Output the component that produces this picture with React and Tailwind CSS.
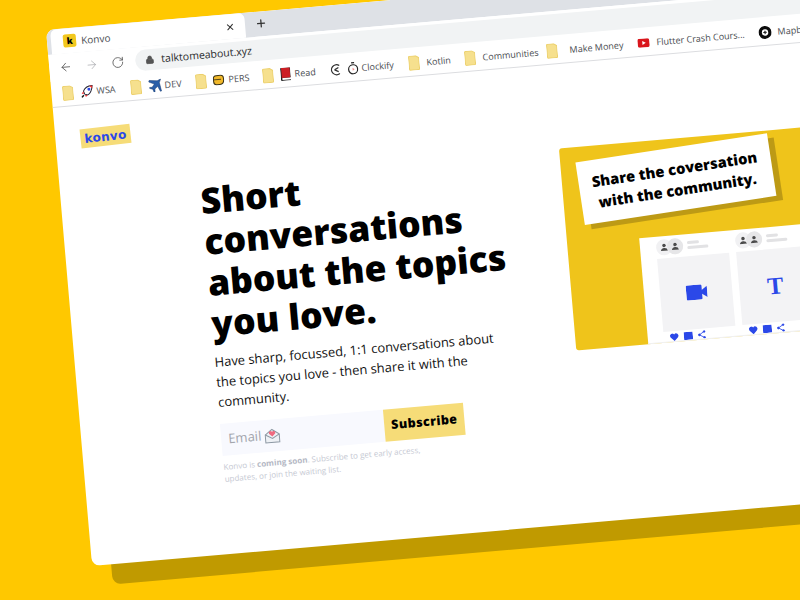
import React from 'react';
import { ArrowLeft, ArrowRight, RotateCw, Lock, X, Plus } from 'lucide-react';

const BLUE = '#2b48e8';

function Folder() {
  return (
    <svg width="11" height="15" viewBox="0 0 11 15" className="shrink-0">
      <path d="M.5 1.500q0-1 1-1h6l3 2v11q0 1-1 1h-8q-1 0-1-1z" fill="#f6e08e" stroke="#ecd06c" />
    </svg>
  );
}

function Rocket() {
  return (
    <svg width="13" height="13" viewBox="0 0 13 13" className="shrink-0">
      <path d="M4 9 3 6q2-5 9-5-1 7-5 9z" fill="#fff" stroke="#223" strokeWidth="1" />
      <circle cx="8.500" cy="4.500" r="1.500" fill="#2b48e8" />
      <path d="M12 1 9 1l3 3z" fill="#e33" />
      <path d="M3 6 1 8l2 1zM7 10l-2 2-1-2z" fill="#e33" />
      <path d="M3 10 1 12" stroke="#111" strokeWidth="1.500" />
    </svg>
  );
}

function Plane() {
  return (
    <svg width="13" height="13" viewBox="0 0 13 13" className="shrink-0">
      <path d="M12.500.5 9 2 1 1 .5 2.500 6 5 3.500 8 1 8l0 1 3 1 1 3 1-.2V10l3-2.500 2.500 5.500 1-.5L11 4z" fill="#2a5ea8" stroke="#173a70" strokeWidth=".5" />
    </svg>
  );
}

function Fist() {
  return (
    <svg width="12" height="11" viewBox="0 0 12 11" className="shrink-0">
      <path d="M1 4q0-3 3-3h4q3 0 3 3v2q0 4-4 4H4q-3 0-3-3z" fill="#f1b82a" stroke="#3a3216" />
      <path d="M1.500 5h7" stroke="#3a3216" strokeWidth=".8" />
    </svg>
  );
}

function Book() {
  return (
    <svg width="10" height="13" viewBox="0 0 10 13" className="shrink-0">
      <path d="M0 1q0-1 1-1h9v10H1.500v2H10v1H1q-1 0-1-1z" fill="#222" />
      <rect x="1" y="0" width="8.500" height="10" fill="#cc1f25" />
    </svg>
  );
}

function Gauge() {
  return (
    <svg width="13" height="13" viewBox="0 0 13 13" fill="none" stroke="#333" strokeWidth="1.300" className="shrink-0">
      <path d="M11 2.500A5 5 0 1 0 11 10.500" />
      <path d="M6 6.500 10 4.500M6 6.500l4 2" />
    </svg>
  );
}

function Stopwatch() {
  return (
    <svg width="11" height="13" viewBox="0 0 11 13" fill="none" stroke="#222" strokeWidth="1.200" className="shrink-0">
      <circle cx="5.500" cy="7.500" r="4.500" />
      <path d="M4 1h3" />
      <path d="M5 6l2 1.500-2 1.500z" fill="#e88" stroke="none" />
    </svg>
  );
}

function Youtube() {
  return (
    <svg width="12" height="9" viewBox="0 0 12 9" className="shrink-0">
      <rect width="12" height="9" rx="2.200" fill="#d9161c" />
      <path d="M4.800 2.500v4l3.400-2z" fill="#fff" />
    </svg>
  );
}

function MapbIcon() {
  return (
    <svg width="13" height="13" viewBox="0 0 13 13" className="shrink-0">
      <circle cx="6.500" cy="6.500" r="6.500" fill="#0b0b0b" />
      <circle cx="6.500" cy="6.500" r="3.200" fill="#fff" />
      <path d="M6.500 4.800v3.400M4.800 6.500h3.400" stroke="#0b0b0b" />
    </svg>
  );
}

function Bookmark({ icon, label, gap, width }) {
  return (
    <div className={`flex items-center shrink-0 ${gap} ${width}`}>
      {icon}
      {label && <span className="text-[9px] leading-none text-[#4a4d52] whitespace-nowrap">{label}</span>}
    </div>
  );
}

function Person() {
  return (
    <svg width="8" height="8" viewBox="0 0 8 8" fill="#4b4b4b">
      <circle cx="4" cy="2.200" r="1.700" />
      <path d="M.5 7.500Q1 4.800 4 4.800T7.500 7.500z" />
    </svg>
  );
}

function MiniCard({ children }) {
  return (
    <div className="flex flex-col w-[72px] shrink-0">
      <div className="flex items-center h-[20px]">
        <div className="w-[16px] h-[16px] rounded-full bg-[#f1f1f3] flex items-center justify-center">
          <Person />
        </div>
        <div className="w-[16px] h-[16px] rounded-full bg-[#e6e6e8] flex items-center justify-center -ml-[5px]">
          <Person />
        </div>
        <div className="ml-[4px] flex flex-col gap-[2px]">
          <div className="w-[12px] h-[3px] rounded-full bg-[#e2e2e4]" />
          <div className="w-[21px] h-[3px] rounded-full bg-[#e2e2e4]" />
        </div>
      </div>
      <div className="h-[73px] bg-[#f3f3f5] flex items-center justify-center mt-[1px]">{children}</div>
      <div className="flex items-center gap-[5px] mt-[2px] pl-[6px]" style={{ color: BLUE }}>
        <svg width="9" height="8" viewBox="0 0 9 8" fill="currentColor">
          <path d="M4.500 8 .7 4.200A2.300 2.300 0 0 1 4.500 1.400 2.300 2.300 0 0 1 8.300 4.200z" />
        </svg>
        <svg width="9" height="8" viewBox="0 0 9 8" fill="currentColor">
          <path d="M0 0h9v8H2L0 8z" />
        </svg>
        <svg width="8" height="8" viewBox="0 0 8 8" fill="none" stroke="currentColor" strokeWidth=".8">
          <path d="M6.500 1 1.500 4l5 3" />
          <circle cx="6.500" cy="1" r=".9" fill="currentColor" />
          <circle cx="1.500" cy="4" r=".9" fill="currentColor" />
          <circle cx="6.500" cy="7" r=".9" fill="currentColor" />
        </svg>
      </div>
    </div>
  );
}

export default function App() {
  return (
    <div className="relative w-[800px] h-[600px] overflow-hidden bg-[#ffc800] font-['Open_Sans',sans-serif]">
      {/* browser window, skewed like the mockup */}
      <div className="absolute left-0 top-0 w-[1000px] h-[536px] origin-top-left [transform:matrix(1,-0.087,0.086,1,46,30)] bg-white rounded-[8px] overflow-hidden shadow-[19px_20px_0_#c09a00] flex flex-col">
        {/* tab strip */}
        <div className="h-[25px] bg-[#dee1e6] flex items-end pl-[4px] shrink-0">
          <div className="w-[194px] h-[25px] bg-white rounded-t-[6px] flex items-center pl-[12px] pr-[10px]">
            <div className="w-[13px] h-[13px] rounded-[2px] bg-[#f2c81e] flex items-center justify-center text-[9px] font-extrabold leading-none text-black">k</div>
            <span className="ml-[5px] text-[10px] leading-none text-[#4a4d52]">Konvo</span>
            <X className="ml-auto w-[10px] h-[10px] text-[#333]" strokeWidth={2.500} />
          </div>
          <Plus className="ml-[10px] mb-[7px] w-[12px] h-[12px] text-[#333]" strokeWidth={2.500} />
        </div>
        {/* toolbar */}
        <div className="h-[27px] flex items-center pl-[10px] shrink-0 bg-white">
          <ArrowLeft className="w-[13px] h-[13px] text-[#555]" strokeWidth={1.500} />
          <ArrowRight className="ml-[13px] w-[13px] h-[13px] text-[#b4b6b9]" strokeWidth={1.500} />
          <RotateCw className="ml-[13px] w-[13px] h-[13px] text-[#555]" strokeWidth={1.500} />
          <div className="ml-[11px] flex-1 h-[21px] rounded-l-full bg-[#f1f3f4] flex items-center pl-[10px]">
            <Lock className="w-[9px] h-[9px] text-[#555]" fill="#555" strokeWidth={2} />
            <span className="ml-[7px] text-[10.500px] leading-none text-[#2a2b2d]">talktomeabout.xyz</span>
          </div>
        </div>
        {/* bookmarks */}
        <div className="h-[26px] flex items-center pl-[11px] border-b border-[#dcdde0] shrink-0">
          <Bookmark icon={<Folder />} width="w-[17.500px]" />
          <Bookmark icon={<Rocket />} label="WSA" width="w-[50px]" gap="gap-[3.500px]" />
          <Bookmark icon={<Folder />} width="w-[18px]" />
          <Bookmark icon={<Plane />} label="DEV" width="w-[47px]" gap="gap-[3.500px]" />
          <Bookmark icon={<Folder />} width="w-[17.500px]" />
          <Bookmark icon={<Fist />} label="PERS" width="w-[49.500px]" gap="gap-[4px]" />
          <Bookmark icon={<Folder />} width="w-[18.500px]" />
          <Bookmark icon={<Book />} label="Read" width="w-[47.500px]" gap="gap-[4px]" />
          <Bookmark icon={<Gauge />} width="w-[19px]" />
          <Bookmark icon={<Stopwatch />} label="Clockify" width="w-[61px]" gap="gap-[3.500px]" />
          <Bookmark icon={<Folder />} label="Kotlin" width="w-[56px]" gap="gap-[7.500px]" />
          <Bookmark icon={<Folder />} label="Communities" width="w-[82px]" gap="gap-[7.500px]" />
          <Bookmark icon={<Folder />} label="Make Money" width="w-[91.500px]" gap="gap-[12.500px]" />
          <Bookmark icon={<Youtube />} label="Flutter Crash Cours..." width="w-[120.500px]" gap="gap-[7px]" />
          <Bookmark icon={<MapbIcon />} label="Mapb" gap="gap-[6.500px]" />
        </div>

        {/* page */}
        <div className="flex-1 flex flex-col pl-[25px] pt-[23px]">
          <div className="w-[50px] h-[19px] bg-[#f6dc78] rotate-[-1.500deg] flex items-center justify-center text-[12px] font-extrabold leading-none tracking-[0.3px] font-['DejaVu_Sans',sans-serif]" style={{ color: BLUE }}>
            konvo
          </div>
          <div className="flex items-start mt-[42px]">
            <div className="ml-[114px] w-[360px] shrink-0">
              <h1 className="text-[35.400px] leading-[41px] font-extrabold text-black w-[320px]">
                Short conversations about the topics you love.
              </h1>
              <p className="mt-[8px] w-[290px] text-[12.900px] leading-[20px] text-[#111]">
                Have sharp, focussed, 1:1 conversations about the topics you love - then share it with the community.
              </p>
              <div className="mt-[12px] flex items-stretch h-[32px] w-[243px]">
                <div className="w-[163px] bg-[#f8f9fe] flex items-center pl-[7px] gap-[3px] text-[13px] text-[#a3a6ad]">
                  Email
                  <svg width="16" height="15" viewBox="0 0 16 15" fill="none">
                    <path d="M1 6 8 1l7 5v8H1z" fill="#eef1f5" stroke="#8d98a3" />
                    <path d="M8 8 5 5.200A1.700 1.700 0 0 1 8 3.500 1.700 1.700 0 0 1 11 5.200z" fill="#ef6b80" />
                    <path d="M1 6l7 4 7-4" stroke="#8d98a3" />
                  </svg>
                </div>
                <div className="flex-1 bg-[#f6dc78] flex items-center justify-center text-[12.500px] font-extrabold tracking-[0.4px] text-black">
                  Subscribe
                </div>
              </div>
              <p className="mt-[5px] w-[215px] text-[8px] leading-[12px] text-[#c6c9d3]">
                Konvo is <span className="font-bold text-[#b4b8c4]">coming soon</span>. Subscribe to get early access, updates, or join the waiting list.
              </p>
            </div>
            {/* share panel */}
            <div className="relative w-[400px] h-[202px] shrink-0 rounded-[3px] bg-[#efc41b] pt-[96px] pl-[72px]">
              <div className="absolute left-[17px] top-[9px] w-[193px] h-[63px] rotate-[-3.700deg] bg-white shadow-[6px_5px_0_#bd9a15] flex items-center justify-center text-center text-[14.700px] leading-[21px] font-extrabold text-black">
                <span>Share the coversation<br />with the community.</span>
              </div>
              <div className="bg-white h-[106px] flex gap-[7px] pl-[16px] pt-[1px] overflow-hidden border-b border-[#f0f0f0]">
                <MiniCard>
                  <svg width="21" height="15" viewBox="0 0 24 16" fill={BLUE} preserveAspectRatio="none">
                    <rect width="18" height="16" rx="1.500" />
                    <path d="M17 6.500 24 2v12l-7-4.500z" />
                  </svg>
                </MiniCard>
                <MiniCard>
                  <span className="font-['Liberation_Serif',serif] text-[24px] font-bold leading-none" style={{ color: BLUE }}>T</span>
                </MiniCard>
                <MiniCard />
              </div>
            </div>
          </div>
        </div>
      </div>
    </div>
  );
}
